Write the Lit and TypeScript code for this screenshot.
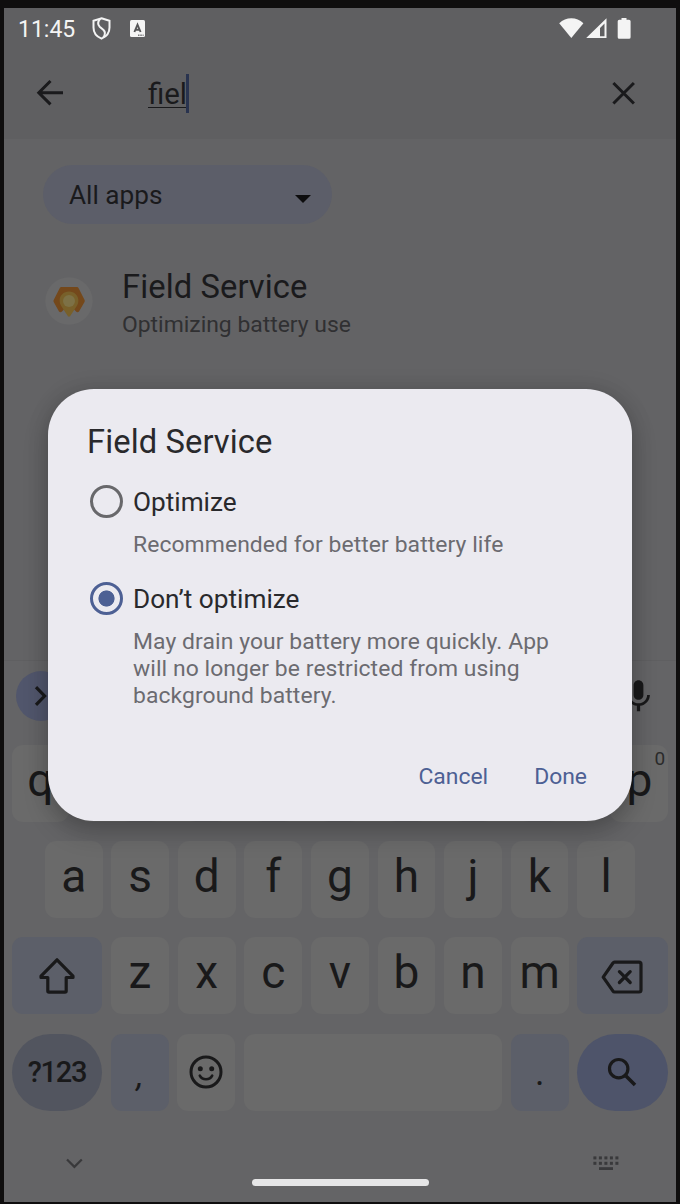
import { LitElement, html, svg, css } from "lit";
import { customElement } from "lit/decorators.js";

@customElement("key-board")
class KeyBoard extends LitElement {
  static styles = css`
    :host {
      display: flex;
      flex-direction: column;
      flex: 1;
      background: #646466;
      color: #19191a;
      border-top: 1px solid #5f5f61;
      box-sizing: border-box;
    }
    svg { display: block; flex: none; }
    .tools {
      height: 84px;
      box-sizing: border-box;
      padding: 0 18px 14px 12px;
      display: flex;
      align-items: center;
      justify-content: space-between;
    }
    .expand {
      width: 50px;
      height: 50px;
      border-radius: 50%;
      background: #51566c;
      display: flex;
      align-items: center;
      justify-content: center;
    }
    .rows { display: flex; flex-direction: column; gap: 19.2px; padding: 0 7.8px 0 7.5px; }
    .row { display: flex; gap: 8.8px; height: 77px; }
    .row.inset { padding: 0 33.3px; }
    .key {
      flex: 1 1 0;
      min-width: 0;
      box-sizing: border-box;
      border-radius: 11px;
      background: #6a6a6a;
      display: flex;
      align-items: center;
      justify-content: center;
      padding-bottom: 7px;
      font-size: 46px;
      line-height: 54px;
      position: relative;
    }
    .hint { position: absolute; top: 3px; right: 3px; font-size: 19px; line-height: 22px; color: #2a2a2b; }
    .mod { background: #5c5f69; }
    .wide { flex: 0 0 90.8px; padding-bottom: 0; }
    .wide.back { padding: 3px 2px 0 0; }
    .wide.go { background: #4e546a; padding-right: 1px; }
    .small { flex: 0 0 57.6px; }
    .flat { padding-bottom: 0; }
    .pill { border-radius: 39px; }
    .sym { background: #52555f; font-size: 29px; font-weight: 500; letter-spacing: -1.3px; }
    .comma { font-size: 34px; font-style: italic; padding: 6px 0 0; }
    .dot { font-size: 36px; padding: 2px 0 0; }
    .nav {
      flex: 1;
      display: grid;
      grid-template-columns: 1fr 177px 1fr;
      color: #39393b;
    }
    .down { padding: 47px 0 0 62px; }
    .ime { padding: 45px 0 0 164px; }
    .home { align-self: end; height: 7px; margin-bottom: 16px; border-radius: 4px; background: #e6e6e7; }
  `;

  key(c: string, hint = "") {
    return html`<div class="key">${c}${hint ? html`<span class="hint">${hint}</span>` : ""}</div>`;
  }

  render() {
    const dots = [0, 1, 2, 3, 4].flatMap((i) => [0, 1].map((j) => svg`<rect x=${0.4 + i * 5.5} y=${0.4 + j * 5.4} width="3" height="3"/>`));
    return html`
      <div class="tools">
        <div class="expand">
          <svg width="16" height="22" viewBox="0 0 16 22" fill="none" stroke="currentColor" stroke-width="3.2"><path d="M3 2.2L11.6 11L3 19.8"/></svg>
        </div>
        <svg width="39" height="39" viewBox="0 0 24 24" fill="currentColor"><path d="M12 14c1.66 0 3-1.34 3-3V5c0-1.66-1.34-3-3-3S9 3.340 9 5v6c0 1.660 1.340 3 3 3zm5.300-3c0 3-2.540 5.100-5.300 5.100S6.700 14 6.700 11H5c0 3.410 2.720 6.230 6 6.720V21h2v-3.280c3.280-.480 6-3.300 6-6.720h-1.700z"/></svg>
      </div>
      <div class="rows">
        <div class="row">${this.key("q")}${Array.from({ length: 8 }, () => this.key(""))}${this.key("p", "0")}</div>
        <div class="row inset">${[..."asdfghjkl"].map((c) => this.key(c))}</div>
        <div class="row">
          <div class="key mod wide">
            <svg width="38" height="37" viewBox="0 0 38 37" fill="none" stroke="currentColor" stroke-width="3.2" stroke-linejoin="round"><path d="M19 2.800L3 19.200V20.500H9.800V34Q9.800 35.200 11 35.200H27Q28.200 35.200 28.200 34V20.500H35V19.200Z"/></svg>
          </div>
          ${[..."zxcvbnm"].map((c) => this.key(c))}
          <div class="key mod wide back">
            <svg width="42" height="34" viewBox="0 0 42 34" fill="none" stroke="currentColor" stroke-width="3.2" stroke-linejoin="round"><path d="M13.500 2.200H38Q40 2.200 40 4.200V30Q40 32 38 32H13.500Q12.500 32 12 31.200L2.200 17.100L12 3Q12.500 2.200 13.500 2.200Z"/><path stroke-linecap="round" d="M18.400 11.700L29.200 22.500M29.200 11.700L18.400 22.500"/></svg>
          </div>
        </div>
        <div class="row">
          <div class="key sym wide pill">?123</div>
          <div class="key mod small comma">,</div>
          <div class="key small flat">
            <svg width="34" height="34" viewBox="0 0 34 34" fill="currentColor"><circle cx="17" cy="17" r="15" fill="none" stroke="currentColor" stroke-width="3"/><circle cx="11.300" cy="13.800" r="2.500"/><circle cx="22.700" cy="13.800" r="2.500"/><path d="M10.800 20.600Q12.700 24.200 17 24.200T23.200 20.600" fill="none" stroke="currentColor" stroke-width="2.600" stroke-linecap="round"/></svg>
          </div>
          <div class="key"></div>
          <div class="key mod small dot">.</div>
          <div class="key go wide pill">
            <svg width="30" height="30" viewBox="0 0 30 30" fill="none" stroke="currentColor" stroke-width="3.200"><circle cx="11.700" cy="11.700" r="9.200"/><path stroke-width="3.600" d="M19 19L28 28"/></svg>
          </div>
        </div>
      </div>
      <div class="nav">
        <div class="down"><svg width="17" height="11" viewBox="0 0 17 11" fill="none" stroke="currentColor" stroke-width="2.200"><path d="M1 1.500L8.400 8.900L15.800 1.500"/></svg></div>
        <div class="home"></div>
        <div class="ime"><svg width="26" height="15" viewBox="0 0 26 15" fill="currentColor">${dots}<rect x="6" y="11.200" width="14" height="2.800"/></svg></div>
      </div>
    `;
  }
}

@customElement("battery-dialog")
class BatteryDialog extends LitElement {
  static styles = css`
    :host {
      display: block;
      box-sizing: border-box;
      padding: 34px 39px 0;
      border-radius: 46px;
      background: #ebeaf0;
      color: #29292c;
      box-shadow: 0 12px 26px rgba(0, 0, 0, 0.2), 0 0 22px rgba(0, 0, 0, 0.12);
    }
    .title { font-size: 32.7px; line-height: 38px; letter-spacing: 0.1px; }
    .option { display: grid; grid-template-columns: 33px 1fr; column-gap: 10px; padding-left: 3px; }
    .radio { box-sizing: border-box; width: 33px; height: 33px; border-radius: 50%; border: 3.300px solid #68686b; }
    .radio.on { border-color: #4d6094; background: radial-gradient(circle, #4d6094 7.700px, transparent 8.400px); }
    .name { font-size: 26.2px; line-height: 34px; }
    .note { grid-column: 2; margin-top: 12px; font-size: 22.900px; line-height: 27px; letter-spacing: 0.08px; color: #6b6b70; white-space: nowrap; }
    .first { margin-top: 24px; }
    .second { margin-top: 24px; }
    .actions { display: flex; justify-content: flex-end; gap: 46px; margin-top: 55px; padding-right: 6px; font-size: 22.900px; line-height: 26px; color: #4d6094; }
  `;
  render() {
    return html`
      <div class="title">Field Service</div>
      <div class="option first">
        <div class="radio"></div>
        <div class="name">Optimize</div>
        <div class="note">Recommended for better battery life</div>
      </div>
      <div class="option second">
        <div class="radio on"></div>
        <div class="name">Don’t optimize</div>
        <div class="note">May drain your battery more quickly. App<br />will no longer be restricted from using<br />background battery.</div>
      </div>
      <div class="actions"><span>Cancel</span><span>Done</span></div>
    `;
  }
}

@customElement("app-root")
class AppRoot extends LitElement {
  static styles = css`
    :host {
      display: flex;
      box-sizing: border-box;
      width: 680px;
      height: 1204px;
      padding: 8px 4px 2px;
      background: #0f0e0e;
      font-family: Roboto, sans-serif;
    }
    svg { display: block; flex: none; }
    .screen { position: relative; flex: 1; display: flex; flex-direction: column; background: #636365; color: #1a1a1c; overflow: hidden; }
    .head { height: 131px; background: #5f5f61; }
    .status { height: 40px; box-sizing: border-box; padding: 0 44px 0 14px; display: flex; align-items: center; color: #f4f4f4; }
    .clock { font-size: 23px; line-height: 28px; width: 74px; padding-top: 3px; box-sizing: border-box; }
    .status .keyboard { margin-left: 19px; }
    .right { margin-left: auto; display: flex; align-items: center; }
    .search { height: 91px; box-sizing: border-box; padding: 0 40px 1px 32px; display: flex; align-items: center; }
    .query { margin-left: 84px; flex: 1; display: flex; align-items: center; font-size: 29.4px; line-height: 36px; }
    .typed { border-bottom: 1.500px solid #1a1a1c; line-height: 26px; margin-top: 2px; }
    .caret { width: 3px; height: 39px; background: #29334f; margin-left: -1px; }
    .body { height: 521px; box-sizing: border-box; padding: 26px 39px 0; }
    .chip { width: 289px; height: 59px; box-sizing: border-box; border-radius: 30px; background: #5c5e69; padding: 0 21px 0 26px; display: flex; align-items: center; justify-content: space-between; font-size: 26.2px; }
    .chip svg { margin-top: 9px; }
    .item { display: flex; align-items: flex-start; margin-top: 44px; padding-left: 2px; }
    .item svg { margin-top: 9px; }
    .text { margin-left: 29px; }
    .name { font-size: 32.7px; line-height: 38px; letter-spacing: 0.1px; }
    .sub { font-size: 22.900px; line-height: 30px; margin-top: 4px; color: #303032; }
    .modal { position: absolute; left: 44px; top: 381px; width: 584px; height: 432px; }
  `;
  render() {
    return html`
      <div class="screen">
        <div class="head">
          <div class="status">
            <span class="clock">11:45</span>
            <svg width="19" height="23" viewBox="0 0 19 23" fill="none" stroke="currentColor" stroke-width="2"><path d="M9.500 1.200L17.500 3.800V10.500C17.500 16 14 19.800 9.500 21.600C5 19.800 1.500 16 1.500 10.500V3.800Z"/><path d="M8.200 1.600C5.500 5 5.200 7.300 7.700 9.700L11.500 13C13.500 15 13.500 17.300 11.300 20.500"/></svg>
            <svg class="keyboard" width="15" height="17" viewBox="0 0 15 17"><rect width="15" height="17" rx="1.500" fill="currentColor"/><path d="M4.400 12L7.500 4.600L10.600 12M5.600 9.700H9.400" fill="none" stroke="#555557" stroke-width="1.900"/><path d="M8 15.200h1.500M10.300 15.200h1.500M12.600 15.200h1" stroke="#777779" stroke-width="1.400"/></svg>
            <div class="right">
              <svg width="73" height="23" viewBox="0 0 73 23" fill="currentColor"><path d="M.2 6.200Q5.500 1.200 12.300 1.200T24.400 6.200L12.300 21Z"/><path fill-rule="evenodd" d="M47.500 1.300V21H27.200ZM45.500 6.500L41 11V19.300H45.500Z"/><path d="M62.500 1h5v1.700h2.500q1.600 0 1.600 1.600v15.900q0 1.600-1.600 1.600h-9.700q-1.600 0-1.600-1.600V4.300q0-1.600 1.600-1.600h2.200z"/></svg>
            </div>
          </div>
          <div class="search">
            <svg width="28" height="28" viewBox="0 0 28 28" fill="none" stroke="currentColor" stroke-width="3"><path d="M14.500 2L2.800 13.700L14.500 25.400M3 13.700H27"/></svg>
            <div class="query"><span class="typed">fiel</span><span class="caret"></span></div>
            <svg width="25" height="25" viewBox="0 0 25 25" fill="none" stroke="currentColor" stroke-width="3"><path d="M2.400 2L22.900 22.500M22.900 2L2.400 22.500"/></svg>
          </div>
        </div>
        <div class="body">
          <div class="chip">All apps<svg width="16" height="8" viewBox="0 0 16 8"><path d="M0 0H16L8 8Z" fill="#0d0d0e"/></svg></div>
          <div class="item">
            <svg width="48" height="48" viewBox="0 0 48 48">
              <circle cx="24" cy="24" r="23.700" fill="#69696a"/>
              <path d="M16.300 10H32Q33 10 33.500 10.900L39.600 23Q40 24 39.500 25L34 34.500Q32.500 36 31 34.500L24 27L17 34.500Q15.500 36 14 34.500L8.700 25Q8.200 24 8.700 23L14.800 10.900Q15.300 10 16.300 10Z" fill="#74481b"/>
              <path d="M24 14.600C18.500 14.600 14.600 18.600 14.600 23.800C14.600 27.500 16.500 29.500 18.500 32.500L22.800 39Q24 40.500 25.200 39L29.500 32.500C31.500 29.500 33.400 27.500 33.400 23.800C33.400 18.600 29.500 14.600 24 14.600Z" fill="#78602a"/>
              <circle cx="24" cy="24" r="6" fill="#7d7146"/>
            </svg>
            <div class="text">
              <div class="name">Field Service</div>
              <div class="sub">Optimizing battery use</div>
            </div>
          </div>
        </div>
        <key-board></key-board>
        <battery-dialog class="modal"></battery-dialog>
      </div>
    `;
  }
}
